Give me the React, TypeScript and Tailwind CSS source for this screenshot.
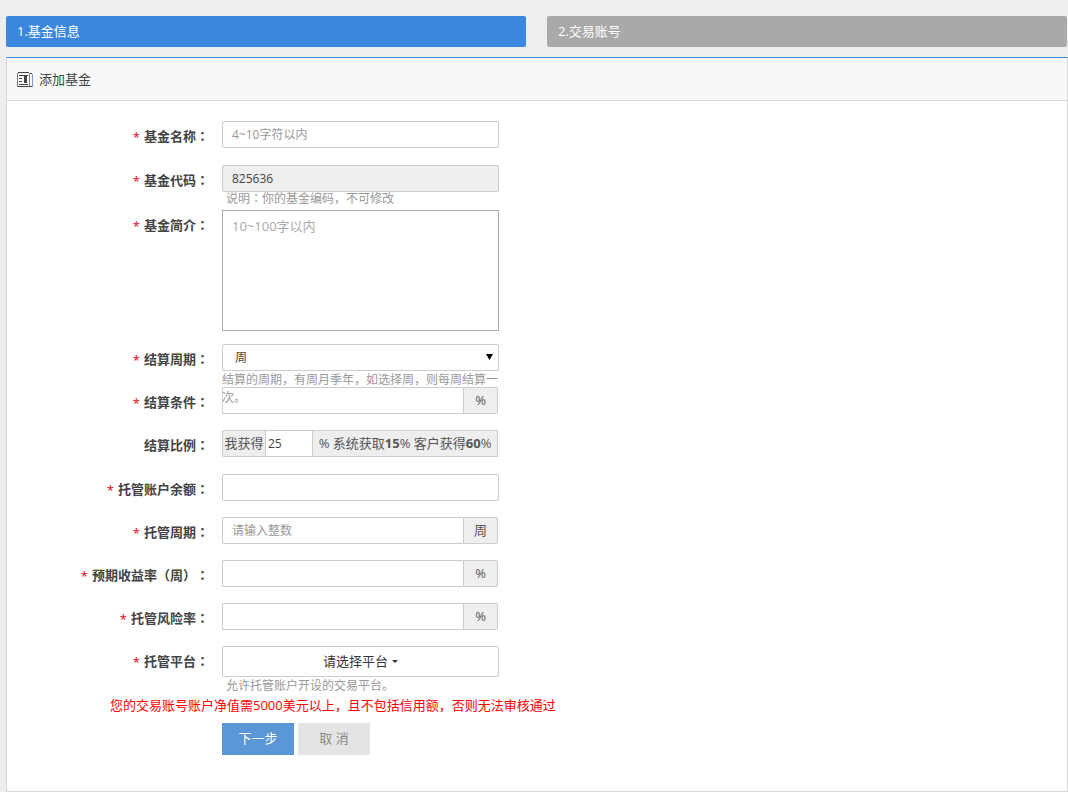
import React, { useState } from 'react';

const inputClass =
  'block h-[27px] w-full rounded-xs border border-[#ccc] px-[9px] text-xs text-[#444] placeholder:text-[#999] outline-none focus:border-[#3a87dd]';
const addonClass =
  'flex h-[27px] items-center justify-center border border-[#ccc] bg-[#eee] text-[13px] text-[#555]';

interface RowProps {
  label: string;
  htmlFor: string;
  required?: boolean;
  className?: string;
  children: React.ReactNode;
}

const Colon: React.FC = () => <span className="font-['Noto_Sans_CJK_TC',sans-serif]">：</span>;

const Row: React.FC<RowProps> = ({ label, htmlFor, required = true, className = 'mb-4', children }) => (
  <div className={`flex items-start gap-[13px] ${className}`}>
    <label htmlFor={htmlFor} className="w-[202px] shrink-0 pt-[5px] text-right leading-5 font-bold text-[#444]">
      {required && <span className="mr-1 align-[-1px] font-normal text-[#e60012]">*</span>}
      {label}
      <Colon />
    </label>
    <div className="relative w-[277px]">{children}</div>
  </div>
);

interface UnitInputProps {
  id: string;
  unit: string;
  placeholder?: string;
}

const UnitInput: React.FC<UnitInputProps> = ({ id, unit, placeholder }) => (
  <div className="flex pr-px">
    <input id={id} type="text" placeholder={placeholder} className={`${inputClass} rounded-r-none border-r-0`} />
    <span className={`${addonClass} w-[35px] shrink-0 rounded-r-xs`}>{unit}</span>
  </div>
);

const NewsIcon: React.FC = () => (
  <svg width="16" height="16" viewBox="0 0 16 16" fill="none" stroke="#444" aria-hidden="true">
    <path d="M1 .5h11M1 14.5h14M12 1.5h3" />
    <path d="M.5 1v14" stroke="#777" />
    <path d="M12.5 1v13" stroke="#888" />
    <path d="M15.5 2v13" stroke="#7a9cc4" />
    <path d="M2 3.5h9M2 6.5h3M2 9.5h3M2 12.5h9" />
    <path d="M7 4h3v7H7z" fill="#444" stroke="none" />
  </svg>
);

const App: React.FC = () => {
  const [share, setShare] = useState('25');

  return (
    <div className="min-h-screen bg-[#eee] pt-4 pl-1.5 font-['Open_Sans','Noto_Sans_CJK_SC',sans-serif] text-[13px] text-[#444] [text-spacing-trim:space-all]">
      <ol className="mb-2.5 grid grid-cols-2 gap-[21px] pr-px leading-[31px] text-white">
        <li className="rounded-xs bg-[#3a87dd] px-[11px]">1.基金信息</li>
        <li className="rounded-xs bg-[#a9a9a9] px-[11px]">2.交易账号</li>
      </ol>

      <section className="border border-t-[#3a87dd] border-r-[#d8d8d8] border-b-[#d8d8d8] border-l-[#d8d8d8] bg-white">
        <h1 className="flex h-[43px] items-center gap-1.5 border-b border-[#d8d8d8] bg-[#f8f8f8] px-2.5 pt-0.5">
          <NewsIcon />
          添加基金
        </h1>

        <form className="pt-5 pb-9" onSubmit={(e) => e.preventDefault()}>
          <Row label="基金名称" htmlFor="name" className="mb-[17px]">
            <input id="name" type="text" placeholder="4~10字符以内" className={inputClass} />
          </Row>

          <Row label="基金代码" htmlFor="code" className="">
            <input id="code" type="text" readOnly value="825636" className={`${inputClass} bg-[#eee]`} />
            <p className="h-[18px] pl-1 text-xs leading-3 text-[#999]">
              说明
              <Colon />
              你的基金编码，不可修改
            </p>
          </Row>

          <Row label="基金简介" htmlFor="intro" className="mb-[13px]">
            <textarea
              id="intro"
              placeholder="10~100字以内"
              className="block h-[121px] w-full resize-none border border-[#a9a9a9] px-[9px] py-[5px] leading-5 placeholder:text-[#a9a9a9] outline-none"
            />
          </Row>

          <Row label="结算周期" htmlFor="period">
            <select
              id="period"
              className="block h-[27px] w-full appearance-none rounded-xs border border-[#ccc] bg-white px-3 text-xs text-[#444]"
            >
              <option>周</option>
              <option>月</option>
              <option>季</option>
              <option>年</option>
            </select>
            <svg className="pointer-events-none absolute top-2.5 right-1.5" width="7" height="6" aria-hidden="true">
              <path d="M0 0h7L3.5 6z" fill="#000" />
            </svg>
            <p className="pointer-events-none absolute top-[27px] left-0 z-10 text-xs leading-[18px] text-[#999]">
              结算的周期，有周月季年，如选择周，则每周结算一次。
            </p>
          </Row>

          <Row label="结算条件" htmlFor="condition">
            <UnitInput id="condition" unit="%" />
          </Row>

          <Row label="结算比例" htmlFor="share" required={false} className="mb-[17px]">
            <div className="flex pr-px">
              <span className={`${addonClass} w-[43px] shrink-0 rounded-l-xs border-r-0`}>我获得</span>
              <input
                id="share"
                type="text"
                value={share}
                onChange={(e) => setShare(e.target.value)}
                className="h-[27px] w-[47px] shrink-0 border border-r-0 border-[#ccc] px-0.5 text-xs text-[#444] outline-none"
              />
              <span className={`${addonClass} grow whitespace-pre`}>
                % 系统获取<b>15</b>% 客户获得<b>60</b>%
              </span>
            </div>
          </Row>

          <Row label="托管账户余额" htmlFor="balance">
            <input id="balance" type="text" className={inputClass} />
          </Row>

          <Row label="托管周期" htmlFor="duration">
            <UnitInput id="duration" unit="周" placeholder="请输入整数" />
          </Row>

          <Row label="预期收益率（周）" htmlFor="profit">
            <UnitInput id="profit" unit="%" />
          </Row>

          <Row label="托管风险率" htmlFor="risk">
            <UnitInput id="risk" unit="%" />
          </Row>

          <Row label="托管平台" htmlFor="platform" className="">
            <button
              id="platform"
              type="button"
              className="flex h-[31px] w-full items-center justify-center gap-1 rounded-xs border border-[#ccc] bg-white text-[#333]"
            >
              请选择平台
              <svg width="6" height="3" aria-hidden="true">
                <path d="M0 0h6L3 3z" fill="#333" />
              </svg>
            </button>
            <p className="pl-1 text-xs leading-[18px] text-[#999]">允许托管账户开设的交易平台。</p>
          </Row>

          <p className="pl-[103px] leading-5 text-[#f00]">
            您的交易账号账户净值需5000美元以上，且不包括信用额，否则无法审核通过
          </p>

          <div className="mt-2 flex gap-1 pl-[215px]">
            <button type="submit" className="h-8 w-[72px] bg-[#5b96d6] text-white">
              下一步
            </button>
            <button type="button" className="h-8 w-[72px] bg-[#e4e4e4] text-[#888]">
              取 消
            </button>
          </div>
        </form>
      </section>
    </div>
  );
};

export default App;
